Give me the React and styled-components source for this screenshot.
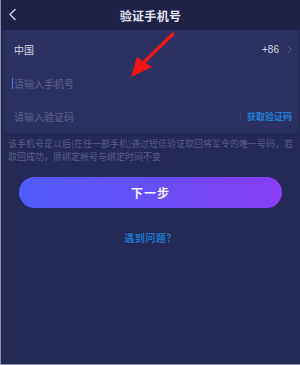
import styled, { createGlobalStyle } from 'styled-components'

const Global = createGlobalStyle`
    html, body {
        margin: 0;
        padding: 0;
        background: #252956;
    }
    body {
        font-family: "Noto Sans CJK SC", "Noto Sans", sans-serif;
    }
`

const Page = styled.div`
    position: relative;
    width: 300px;
    height: 365px;
    box-sizing: border-box;
    background: #252956;
    border-left: 1px solid #8d8fa6;
    border-bottom: 1px solid #8d8fa6;
    overflow: hidden;
`

const Header = styled.header`
    height: 30px;
    background: #1f2148;
    display: flex;
    align-items: center;
    justify-content: center;
    position: relative;
`

const Back = styled.span`
    position: absolute;
    left: 7px;
    top: 8px;
    display: flex;
`

const Title = styled.h1`
    margin: 0;
    color: #e4e5ee;
    font-size: 12px;
    font-weight: 700;
    letter-spacing: 0.3px;
`

const Card = styled.section`
    margin: 0 2px 0 3px;
    background: #2d3161;
    border-radius: 0 0 5px 5px;
    padding: 0 6px 0 10px;
    display: flex;
    flex-direction: column;
`

const Row = styled.div`
    height: 33px;
    display: flex;
    align-items: center;
    justify-content: space-between;
    &:first-child {
        height: 36px;
        padding-top: 1px;
    }
`

const Label = styled.span`
    font-size: 10px;
    color: ${p => (p.$muted ? '#5d6190' : '#d6d7e4')};
    display: flex;
    align-items: center;
`

const Cursor = styled.span`
    width: 1px;
    height: 11px;
    background: #4a7df0;
    margin-left: -2px;
    margin-right: 1px;
`

const Code = styled.span`
    display: flex;
    align-items: center;
    gap: 6px;
    font-size: 9px;
    font-weight: 700;
    color: #1f80d6;
    &::before {
        content: '';
        width: 1px;
        height: 9px;
        background: #3a3f70;
    }
`

const Prefix = styled.span`
    display: flex;
    align-items: center;
    gap: 8px;
    font-size: 10px;
    color: #d6d7e4;
    font-family: "Liberation Sans", "Noto Sans CJK SC", sans-serif;
`

const Hint = styled.p`
    margin: 5px 4px 0 7px;
    font-size: 9px;
    line-height: 12.5px;
    color: #5a5e8a;
`

const Next = styled.button`
    display: block;
    margin: 14px auto 0;
    width: 263px;
    height: 31px;
    border: none;
    border-radius: 16px;
    background: linear-gradient(90deg, #4f5dfa 0%, #6a4df6 55%, #8a3df4 100%);
    color: #f2f2fb;
    font-family: inherit;
    font-size: 12px;
    font-weight: 700;
    letter-spacing: 1px;
`

const Help = styled.div`
    margin-top: 22px;
    text-align: center;
    font-size: 10px;
    font-weight: 700;
    color: #1f78c8;
    letter-spacing: 0.5px;
`

const Arrow = styled.svg`
    position: absolute;
    left: 0;
    top: 0;
    pointer-events: none;
`

export default function App() {
    return (
        <Page>
            <Global />
            <Header>
                <Back>
                    <svg width="9" height="13" viewBox="0 0 9 13">
                        <path d="M7 1.5 L2 6.5 L7 11.5" fill="none" stroke="#c9cadb" strokeWidth="1.6" strokeLinecap="round" strokeLinejoin="round" />
                    </svg>
                </Back>
                <Title>验证手机号</Title>
            </Header>
            <Card>
                <Row>
                    <Label>中国</Label>
                    <Prefix>
                        +86
                        <svg width="5" height="9" viewBox="0 0 5 9">
                            <path d="M1 1 L4 4.5 L1 8" fill="none" stroke="#5d6190" strokeWidth="1" />
                        </svg>
                    </Prefix>
                </Row>
                <Row>
                    <Label $muted><Cursor />请输入手机号</Label>
                </Row>
                <Row>
                    <Label $muted>请输入验证码</Label>
                    <Code>获取验证码</Code>
                </Row>
            </Card>
            <Hint>该手机号是以后(在任一部手机)通过短信验证取回将军令的唯一号码，若取回成功，原绑定帐号与绑定时间不变</Hint>
            <Next>下一步</Next>
            <Help>遇到问题？</Help>
            <Arrow width="300" height="365" viewBox="0 0 300 365">
                <line x1="172" y1="34" x2="141" y2="64" stroke="#f01414" strokeWidth="3.2" strokeLinecap="round" />
                <polygon points="130,77 136,57 151,67" fill="#f01414" />
            </Arrow>
        </Page>
    )
}
